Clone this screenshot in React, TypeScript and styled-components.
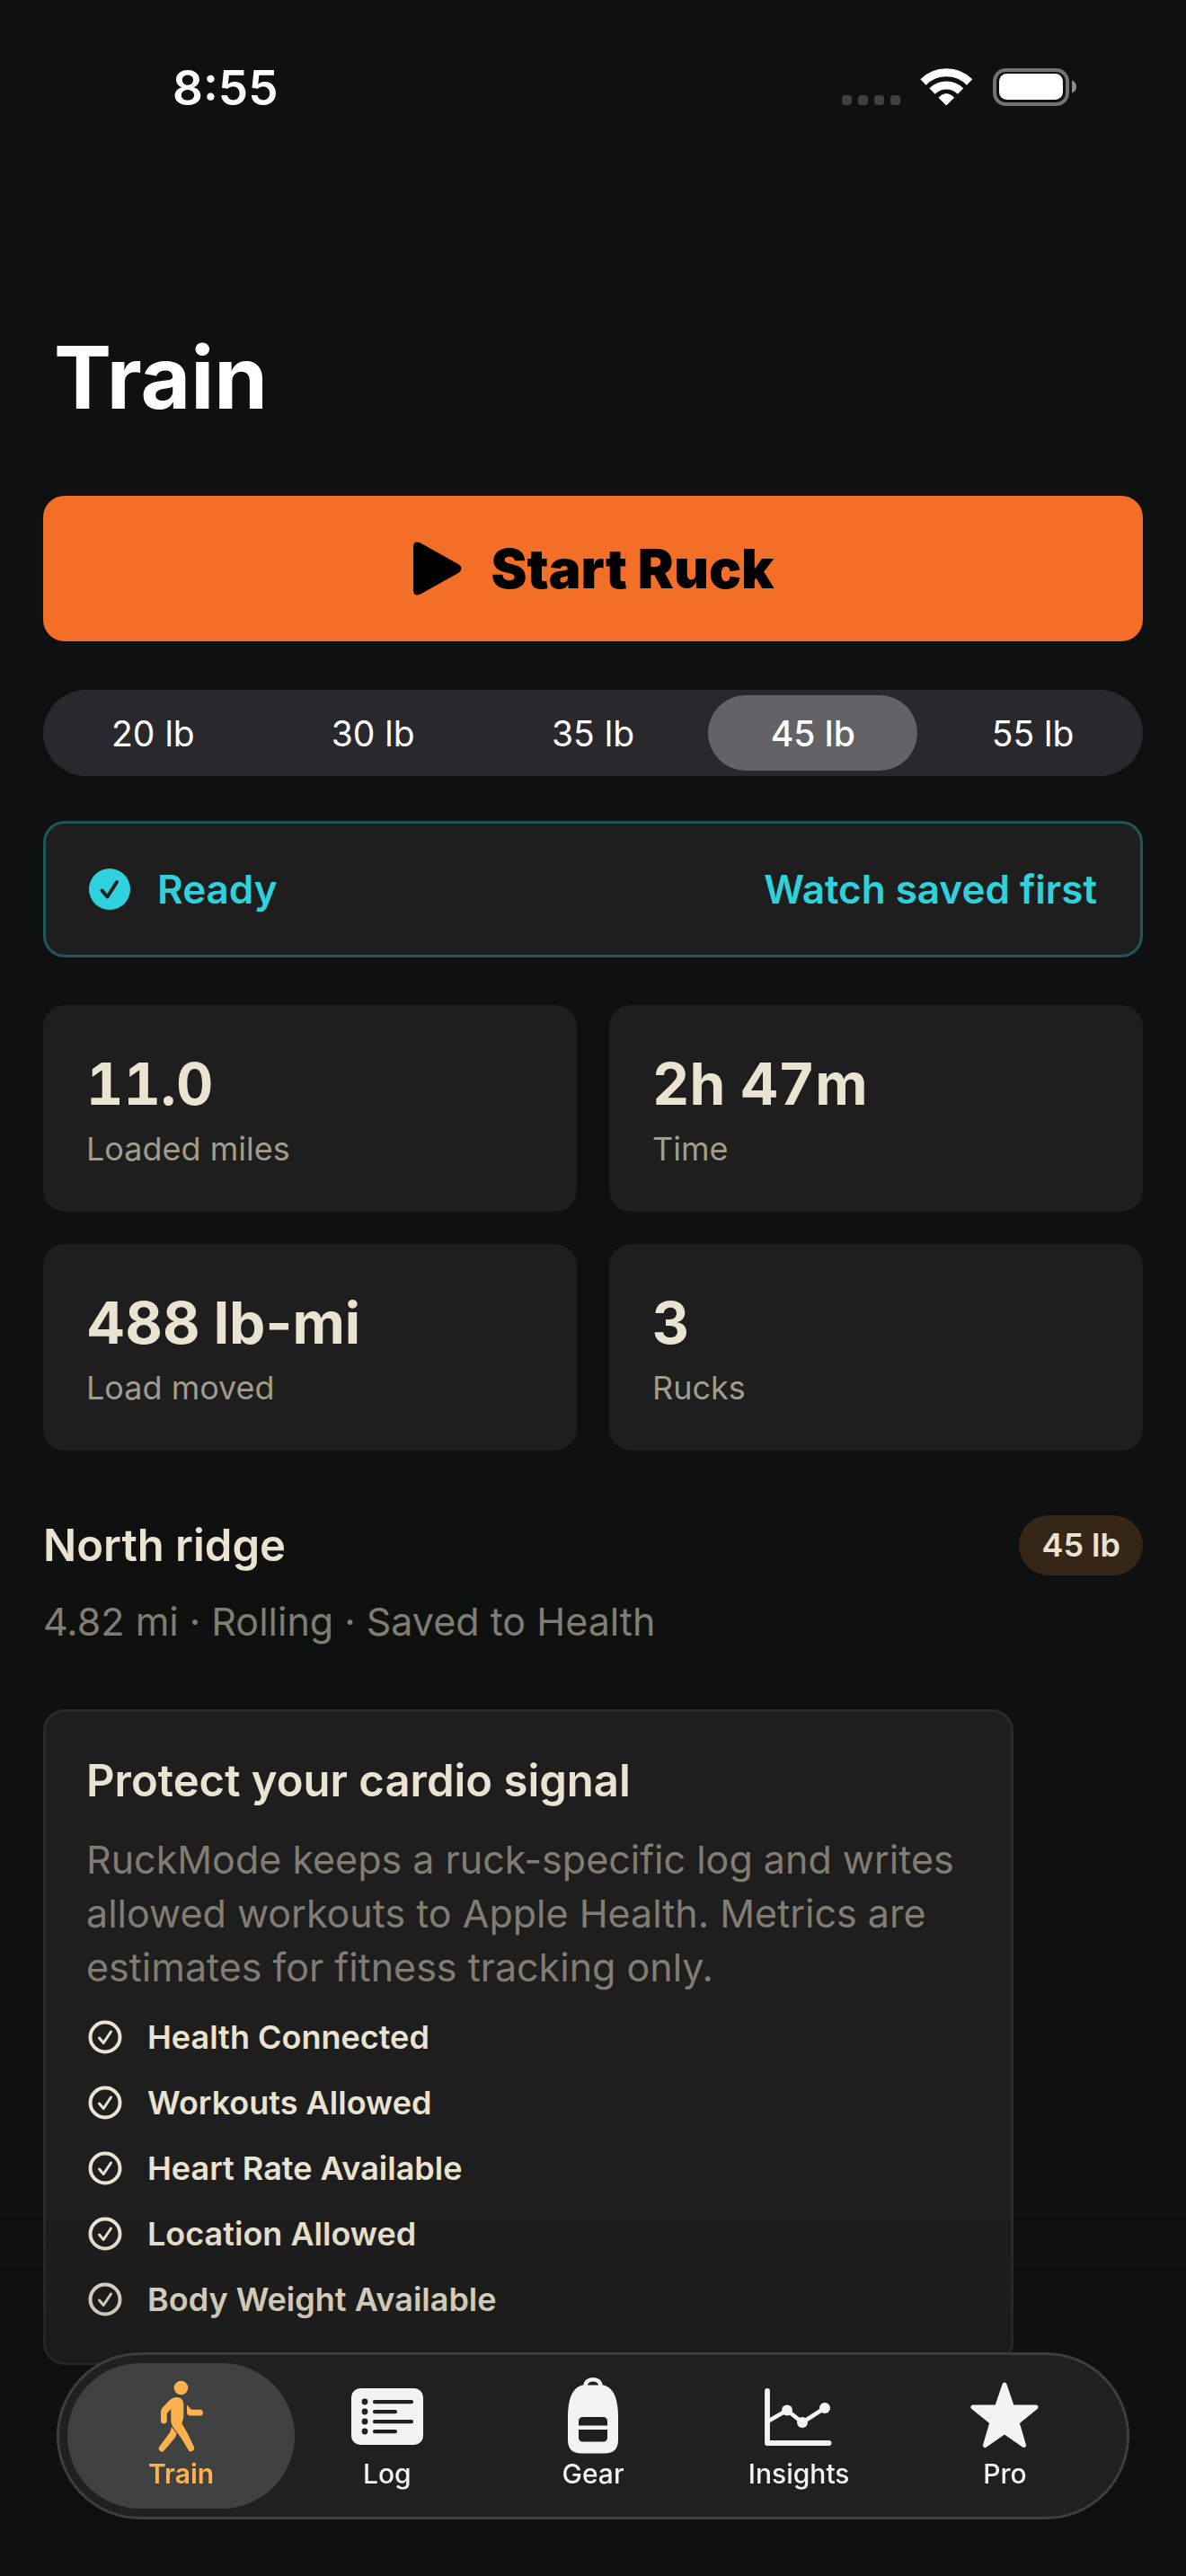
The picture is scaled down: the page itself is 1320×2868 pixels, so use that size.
import React, { useState } from "react";
import styled, { createGlobalStyle } from "styled-components";

const Global = createGlobalStyle`
  *, *::before, *::after { box-sizing: border-box; }
  html, body, #root { height: 100%; }
  body {
    margin: 0;
    background: #0f1110;
    color: #ebe3d1;
    font-family: Inter, "Liberation Sans", sans-serif;
    -webkit-font-smoothing: antialiased;
  }
  button { font: inherit; color: inherit; border: 0; background: none; padding: 0; cursor: pointer; }
  h1, h2, p, ul, dl, dd { margin: 0; padding: 0; }
`;

const Screen = styled.div`
  height: 100vh;
  display: flex;
  flex-direction: column;
  overflow: hidden;
`;

const StatusBar = styled.header`
  display: flex;
  justify-content: space-between;
  align-items: center;
  padding: 66px 120px 0 192px;
  color: #fff;
`;

const Clock = styled.time`
  font-size: 53px;
  line-height: 64px;
  font-weight: 600;
`;

const StatusIcons = styled.svg`
  display: block;
  width: 264px;
  height: 44px;
`;

const Content = styled.main`
  flex: 1;
  min-height: 0;
  padding: 230px 48px 0;
`;

const Title = styled.h1`
  padding: 0 12px;
  font-size: 96px;
  line-height: 120px;
  font-weight: 700;
  color: #fff;
`;

const StartButton = styled.button`
  display: flex;
  align-items: center;
  justify-content: center;
  gap: 32px;
  width: 100%;
  height: 162px;
  margin-top: 72px;
  border-radius: 24px;
  background: #f36f27;
  color: #000;
  font-size: 60px;
  font-weight: 900;
  svg { width: 56px; height: 60px; }
`;

const Segments = styled.fieldset`
  display: grid;
  grid-template-columns: repeat(5, 1fr);
  margin: 54px 0 0;
  padding: 0;
  border: 0;
  border-radius: 48px;
  background: #29292d;
`;

const Segment = styled.label`
  display: flex;
  align-items: center;
  justify-content: center;
  height: 84px;
  margin: 6px;
  border-radius: 42px;
  color: #fff;
  font-size: 39px;
  font-weight: 400;
  cursor: pointer;
  input { appearance: none; position: absolute; margin: 0; }
  &:has(input:checked) { background: #636367; font-weight: 500; }
`;

const ReadyCard = styled.section`
  display: flex;
  align-items: center;
  gap: 30px;
  height: 152px;
  margin-top: 50px;
  padding: 0 48px;
  border: 3px solid #1f5659;
  border-radius: 24px;
  background: #1e1e1e;
  color: #2fd2dc;
  font-size: 44px;
  font-weight: 600;
  svg { width: 46px; height: 46px; }
`;

const ReadyNote = styled.span`
  margin-left: auto;
`;

const Stats = styled.dl`
  display: grid;
  grid-template-columns: repeat(2, 1fr);
  gap: 36px;
  margin-top: 53px;
`;

const Stat = styled.div`
  display: flex;
  flex-direction: column;
  height: 230px;
  padding: 48px;
  border-radius: 24px;
  background: #1e1e1e;
`;

const StatValue = styled.dd<{ $tabular: boolean }>`
  font-size: 64px;
  line-height: 80px;
  font-weight: 700;
  font-variant-numeric: ${(p) => (p.$tabular ? "tabular-nums" : "normal")};
`;

const StatLabel = styled.dt`
  order: 1;
  margin-top: 8px;
  font-size: 36px;
  line-height: 48px;
  color: #a29c8b;
`;

const RuckHead = styled.div`
  display: flex;
  align-items: center;
  justify-content: space-between;
  margin-top: 72px;
`;

const Heading = styled.h2`
  font-size: 49px;
  line-height: 66px;
  font-weight: 600;
`;

const LoadPill = styled.span`
  padding: 0 25px;
  border-radius: 34px;
  background: #362617;
  font-size: 36px;
  line-height: 67px;
  font-weight: 600;
`;

const Muted = styled.p`
  font-size: 43px;
  line-height: 60px;
  color: #817d73;
`;

const RuckMeta = styled(Muted)`
  margin-top: 21px;
`;

const InfoCard = styled.section`
  width: fit-content;
  max-width: 1080px;
  margin-top: 68px;
  padding: 44px 45px 46px;
  border: 3px solid #292b2a;
  border-radius: 24px;
  background: #1e1e1e;
  ${Muted} { margin-top: 24px; }
`;

const Checks = styled.ul`
  && { padding: 0 2px; }
  display: flex;
  flex-direction: column;
  gap: 25px;
  margin-top: 24px;
  list-style: none;
`;

const Check = styled.li`
  display: flex;
  align-items: center;
  gap: 28px;
  font-size: 36px;
  line-height: 48px;
  font-weight: 600;
  svg { width: 38px; height: 38px; }
`;

const Fade = styled.div`
  position: fixed;
  inset: auto 0 0;
  height: 400px;
  background: linear-gradient(rgba(14, 16, 15, 0), rgba(14, 16, 15, 0.3) 60%, rgba(14, 16, 15, 0.9));
  pointer-events: none;
`;

const TabBar = styled.nav`
  position: fixed;
  inset: auto 63px 63px;
  display: grid;
  grid-template-columns: repeat(5, 1fr);
  padding: 9px 21px;
  border: 3px solid #3b403f;
  border-radius: 93px;
  background: #1e2120;
`;

const Tab = styled.button<{ $active: boolean }>`
  display: flex;
  flex-direction: column;
  align-items: center;
  height: 162px;
  margin: 0 -12px;
  padding-top: 14px;
  border-radius: 81px;
  background: ${(p) => (p.$active ? "#404241" : "transparent")};
  color: ${(p) => (p.$active ? "#ffb14e" : "#f2f4f4")};
  font-size: 30px;
  line-height: 38px;
  font-weight: ${(p) => (p.$active ? 600 : 500)};
  svg { width: 90px; height: 90px; }
`;

const StatusGlyphs = () => (
  <StatusIcons viewBox="936 76 264 44" aria-label="No signal, Wi-Fi, battery full">
    {[937, 955, 973, 991].map((x) => (
      <rect key={x} x={x} y="106" width="11" height="11" rx="3.5" fill="#3f4140" />
    ))}
    <g fill="none" stroke="#fff" strokeWidth="9">
      <path d="M1027.500 91.500a36.500 36.500 0 0 1 51.600 0" />
      <path d="M1037.500 101.500a22.300 22.300 0 0 1 31.600 0" />
    </g>
    <path d="M1053.300 117l-8.300-8.300q8.300-8.300 16.600 0z" fill="#fff" stroke="#fff" strokeWidth="1" strokeLinejoin="round" />
    <rect x="1107" y="78" width="81" height="38" rx="12.500" fill="none" stroke="#717271" strokeWidth="4" />
    <rect x="1112" y="82" width="71" height="29" rx="8.500" fill="#fff" />
    <path d="M1193 89.500q5 2 5 7t-5 7z" fill="#8a8b8a" />
  </StatusIcons>
);

const CheckCircle = () => (
  <svg viewBox="0 0 38 38" fill="none" stroke="currentColor" strokeLinecap="round" strokeLinejoin="round" aria-hidden="true">
    <circle cx="19" cy="19" r="16.500" strokeWidth="4" />
    <path d="M12.500 20l4.700 5.500 8.300-12.500" strokeWidth="3" />
  </svg>
);

const WalkIcon = () => (
  <svg viewBox="156 2645 90 90" fill="currentColor" aria-hidden="true">
    <circle cx="200.500" cy="2658.500" r="7.800" />
    <path d="M196 2669c-4 0-7 2-9 4l-7 7.500c-1.400 1.500-2 3-2 5v9.500a3.400 3.400 0 0 0 6.800 0v-8l4.500-5v12c0 5 1.500 7 4 10.500l7.500 10 7.500 12.700a3.600 3.600 0 0 0 6.500-3.200l-7.500-15.500-6-10.500c1.500-3 2-7 2-10v-11c0-5-3-8-7.300-8z" />
    <path d="M207 2677.500l5 5.300h9.500a3.300 3.300 0 0 1 0 6.800h-11.500q-3-.5-3-4z" />
    <path d="M190 2702l5.500 7c-.5 3-1 4-2.500 6l-11 13a3.400 3.400 0 0 1-5.600-4l10-13.500c1.500-2 2-2.500 2.400-4.500z" />
  </svg>
);

const LogIcon = () => (
  <svg viewBox="386 2645 90 90" aria-hidden="true">
    <rect x="391" y="2659" width="80" height="63" rx="10" fill="currentColor" />
    {[2674, 2685, 2696, 2707].map((y, i) => (
      <g key={y} fill="#1e2120">
        <circle cx="406" cy={y} r="3.400" />
        <rect x="415" y={y - 2} width={i % 2 ? 27 : 45} height="4.200" rx="2" />
      </g>
    ))}
  </svg>
);

const PackIcon = () => (
  <svg viewBox="615 2645 90 90" aria-hidden="true">
    <path d="M651.500 2657c0-10.500 17-10.500 17 0" fill="none" stroke="currentColor" strokeWidth="4.500" />
    <path d="M648 2655.500h24c11 3 16 15 16 36v25q0 15-15 15h-26q-15 0-15-15v-25c0-21 5-33 16-36z" fill="currentColor" />
    <path d="M644 2700.500v-4.500q0-5 5-5h22q5 0 5 5v4.500zM644 2705h32v8.500q0 5-5 5h-22q-5 0-5-5z" fill="#1e2120" />
  </svg>
);

const ChartIcon = () => (
  <svg viewBox="845 2645 90 90" fill="none" stroke="currentColor" strokeLinecap="round" strokeLinejoin="round" aria-hidden="true">
    <path d="M855 2662v58h68.500" strokeWidth="5.800" />
    <path d="M857 2695l20-11.500 17 13.500 25-16" strokeWidth="4.500" />
    <g fill="currentColor" stroke="none">
      <circle cx="877" cy="2683.500" r="6" />
      <circle cx="894" cy="2697" r="6" />
      <circle cx="919" cy="2681" r="6" />
    </g>
  </svg>
);

const StarIcon = () => (
  <svg viewBox="1073 2645 90 90" aria-hidden="true">
    <path
      d="M1118 2655l8.500 25h26.500l-21 17 7.500 25.500-21.500-15-21.500 15 7.500-25.500-21-17h26.500z"
      fill="currentColor" stroke="currentColor" strokeWidth="5" strokeLinejoin="round"
    />
  </svg>
);

const LOADS = ["20 lb", "30 lb", "35 lb", "45 lb", "55 lb"];
const STATS = [
  { value: "11.0", label: "Loaded miles", tabular: true },
  { value: "2h 47m", label: "Time", tabular: true },
  { value: "488 lb-mi", label: "Load moved", tabular: false },
  { value: "3", label: "Rucks", tabular: true },
];
const CHECKS = ["Health Connected", "Workouts Allowed", "Heart Rate Available", "Location Allowed", "Body Weight Available"];
const TABS = [
  { name: "Train", Icon: WalkIcon },
  { name: "Log", Icon: LogIcon },
  { name: "Gear", Icon: PackIcon },
  { name: "Insights", Icon: ChartIcon },
  { name: "Pro", Icon: StarIcon },
];

export default function App() {
  const [load, setLoad] = useState("45 lb");
  const [tab, setTab] = useState("Train");
  return (
    <Screen>
      <Global />
      <StatusBar>
        <Clock>8:55</Clock>
        <StatusGlyphs />
      </StatusBar>
      <Content>
        <Title>Train</Title>
        <StartButton type="button">
          <svg viewBox="0 0 56 60" aria-hidden="true">
            <path d="M1 6v48q0 8 8 4.500L51 35q7-5 0-10L9 1.500Q1-2 1 6z" />
          </svg>
          Start Ruck
        </StartButton>
        <Segments aria-label="Load">
          {LOADS.map((l) => (
            <Segment key={l}>
              <input type="radio" name="load" checked={l === load} onChange={() => setLoad(l)} />
              {l}
            </Segment>
          ))}
        </Segments>
        <ReadyCard>
          <svg viewBox="0 0 46 46" aria-hidden="true">
            <circle cx="23" cy="23" r="23" fill="currentColor" />
            <path d="M14.500 24.500l6 7 10.500-16.500" fill="none" stroke="#1e1e1e" strokeWidth="4" strokeLinecap="round" strokeLinejoin="round" />
          </svg>
          <span>Ready</span>
          <ReadyNote>Watch saved first</ReadyNote>
        </ReadyCard>
        <Stats>
          {STATS.map(({ value, label, tabular }) => (
            <Stat key={label}>
              <StatLabel>{label}</StatLabel>
              <StatValue $tabular={tabular}>{value}</StatValue>
            </Stat>
          ))}
        </Stats>
        <RuckHead>
          <Heading>North ridge</Heading>
          <LoadPill>45 lb</LoadPill>
        </RuckHead>
        <RuckMeta>4.82 mi · Rolling · Saved to Health</RuckMeta>
        <InfoCard>
          <Heading>Protect your cardio signal</Heading>
          <Muted>
            RuckMode keeps a ruck-specific log and writes allowed workouts to Apple Health. Metrics are estimates for
            fitness tracking only.
          </Muted>
          <Checks>
            {CHECKS.map((c) => (
              <Check key={c}>
                <CheckCircle />
                {c}
              </Check>
            ))}
          </Checks>
        </InfoCard>
      </Content>
      <Fade />
      <TabBar>
        {TABS.map(({ name, Icon }) => (
          <Tab key={name} type="button" $active={name === tab} onClick={() => setTab(name)}>
            <Icon />
            {name}
          </Tab>
        ))}
      </TabBar>
    </Screen>
  );
}
